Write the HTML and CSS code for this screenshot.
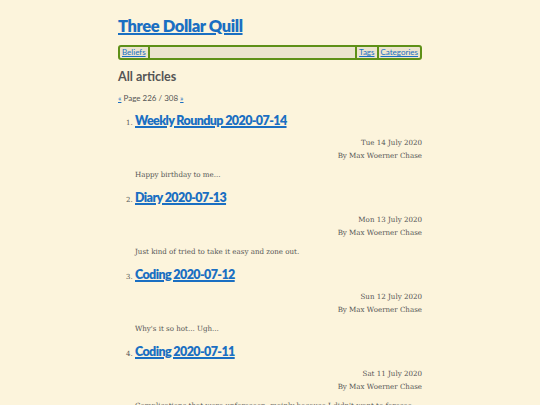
FILE: index.html
```html
<!DOCTYPE html>
<html>
<head>
<meta charset="utf-8">
<link rel="stylesheet" href="styles.css">
</head>
<body>
<div class="page">
  <header class="site-header">
    <h1 class="site-title"><a href="#">Three Dollar Quill</a></h1>
    <nav class="menu">
      <a class="menu-item" href="#">Beliefs</a>
      <span class="menu-spacer"></span>
      <a class="menu-item" href="#">Tags</a>
      <a class="menu-item last" href="#">Categories</a>
    </nav>
  </header>
  <h2 class="section-title">All articles</h2>
  <p class="pager"><a href="#">«</a> Page 226 / 308 <a href="#">»</a></p>
  <ol class="articles">
    <li class="article">
      <h3 class="article-title"><a href="#">Weekly Roundup 2020-07-14</a></h3>
      <div class="meta"><div>Tue 14 July 2020</div><div>By Max Woerner Chase</div></div>
      <p class="excerpt">Happy birthday to me...</p>
    </li>
    <li class="article">
      <h3 class="article-title"><a href="#">Diary 2020-07-13</a></h3>
      <div class="meta"><div>Mon 13 July 2020</div><div>By Max Woerner Chase</div></div>
      <p class="excerpt">Just kind of tried to take it easy and zone out.</p>
    </li>
    <li class="article">
      <h3 class="article-title"><a href="#">Coding 2020-07-12</a></h3>
      <div class="meta"><div>Sun 12 July 2020</div><div>By Max Woerner Chase</div></div>
      <p class="excerpt">Why's it so hot... Ugh...</p>
    </li>
    <li class="article">
      <h3 class="article-title"><a href="#">Coding 2020-07-11</a></h3>
      <div class="meta"><div>Sat 11 July 2020</div><div>By Max Woerner Chase</div></div>
      <p class="excerpt">Complications that were unforeseen, mainly because I didn't want to foresee them.</p>
    </li>
  </ol>
</div>
</body>
</html>
```
FILE: styles.css
```css
html, body {
  margin: 0;
  padding: 0;
  background: #fcf4dc;
}
body {
  font-family: "DejaVu Serif", serif;
  color: #555;
}
.page {
  width: 304px;
  margin: 0 auto;
  padding-top: 14px;
}
a { color: #1a6fc2; }
.site-title {
  margin: 0;
  font-family: Lato, sans-serif;
  font-size: 16.5px;
  font-weight: 800;
  letter-spacing: -0.4px;
  line-height: 24px;
}
.site-title a,
.article-title a {
  text-decoration-thickness: 1.5px;
  text-underline-offset: 1px;
}
.menu {
  display: flex;
  margin-top: 7px;
  border: 2px solid #5e9018;
  border-radius: 3px;
  background: #ece4cf;
  font-family: Lato, sans-serif;
  font-size: 8px;
  line-height: 11px;
}
.menu-item {
  padding: 0 2px;
  border-right: 2px solid #5e9018;
}
.menu-item.last { border-right: none; }
.menu-spacer {
  flex: 1;
  border-right: 2px solid #5e9018;
}
.section-title {
  margin: 8px 0 0;
  font-family: Lato, sans-serif;
  font-size: 12.5px;
  line-height: 18px;
  color: #555;
}
.pager {
  margin: 7px 0 0;
  font-family: Lato, sans-serif;
  font-size: 8px;
  line-height: 11px;
}
.articles {
  margin: 7px 0 0;
  padding-left: 17px;
  font-size: 7px;
}
.article-title {
  margin: 0;
  font-family: Lato, sans-serif;
  font-size: 12.5px;
  font-weight: 800;
  letter-spacing: -0.6px;
  line-height: 20px;
}
.meta {
  margin-top: 6px;
  text-align: right;
  font-size: 7.1px;
  line-height: 12.5px;
}
.excerpt {
  margin: 7px 0 7px;
  font-size: 7.1px;
  line-height: 12px;
}
```
